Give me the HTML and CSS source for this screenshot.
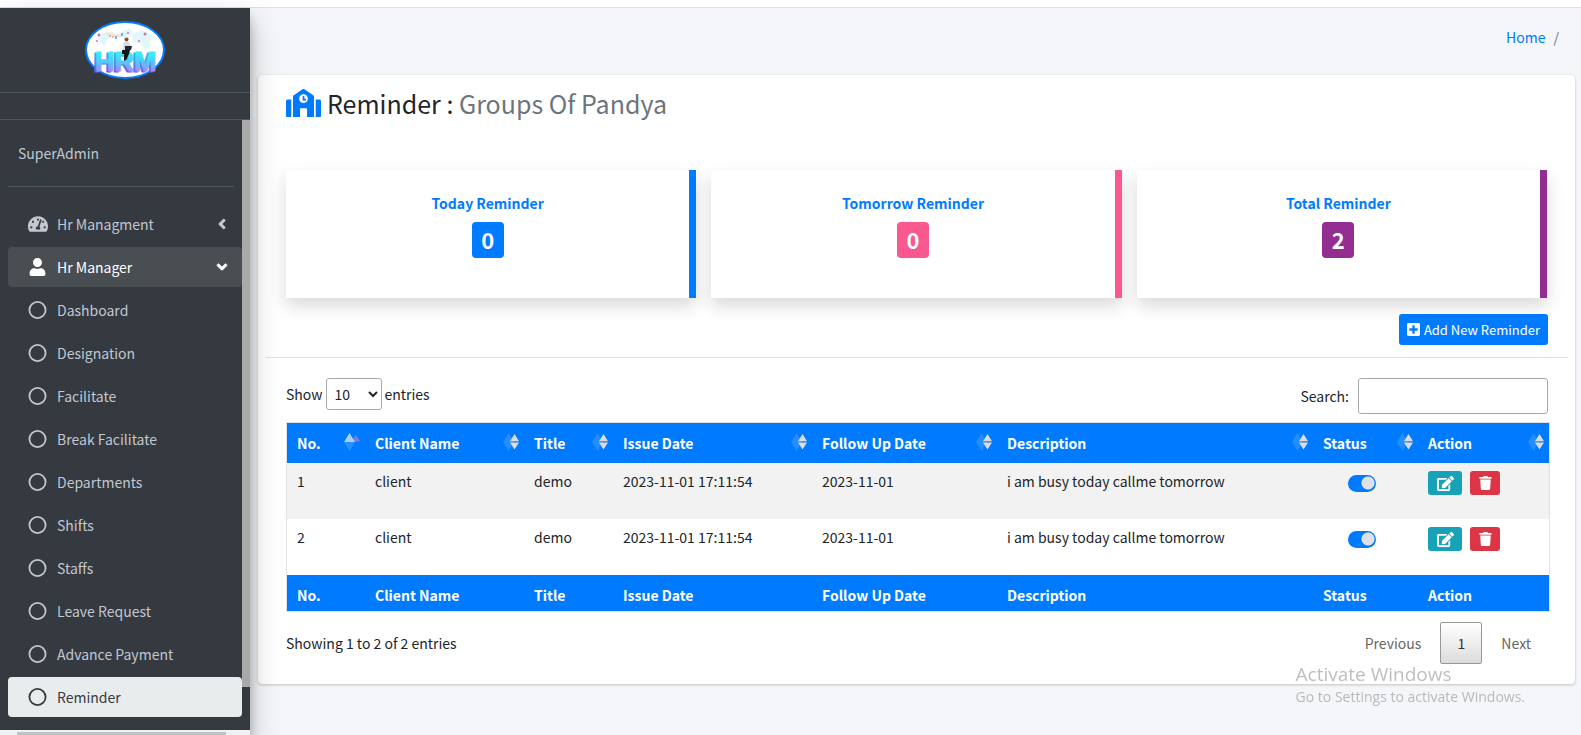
FILE: index.html
```html
<!DOCTYPE html>
<html lang="en">
<head>
<meta charset="utf-8">
<title>HRM - Reminder</title>
<link rel="stylesheet" href="styles.css">
</head>
<body>
<svg class="sprite" aria-hidden="true">
  <symbol id="gauge" viewBox="0 0 576 512"><path d="M288 32C128.94 32 0 160.94 0 320c0 52.8 14.25 102.26 39.06 144.8 5.61 9.62 16.3 15.2 27.44 15.2h443c11.14 0 21.83-5.58 27.44-15.2C561.75 422.26 576 372.8 576 320c0-159.06-128.94-288-288-288zm0 64c14.71 0 26.58 10.13 30.32 23.65-1.11 2.26-2.64 4.23-3.45 6.67l-9.22 27.67c-5.13 3.49-10.97 6.01-17.64 6.01-17.67 0-32-14.33-32-32S270.33 96 288 96zM96 384c-17.67 0-32-14.33-32-32s14.33-32 32-32 32 14.33 32 32-14.33 32-32 32zm48-160c-17.67 0-32-14.33-32-32s14.33-32 32-32 32 14.33 32 32-14.33 32-32 32zm246.77-72.41l-61.33 184C343.13 347.33 352 364.54 352 384c0 11.72-3.38 22.55-8.88 32H232.88c-5.5-9.45-8.88-20.28-8.88-32 0-33.94 26.5-61.43 59.9-63.59l61.34-184.01c4.17-12.56 17.73-19.45 30.36-15.17 12.57 4.19 19.35 17.79 15.17 30.36zm14.66 57.2l15.52-46.55c3.47-1.29 7.13-2.23 11.05-2.23 17.67 0 32 14.33 32 32s-14.33 32-32 32c-11.38-.01-21.25-6.1-26.57-15.22zM480 384c-17.67 0-32-14.33-32-32s14.33-32 32-32 32 14.33 32 32-14.33 32-32 32z"/></symbol>
  <symbol id="user" viewBox="0 0 448 512"><path d="M224 256c70.7 0 128-57.3 128-128S294.7 0 224 0 96 57.3 96 128s57.3 128 128 128zm89.6 32h-16.7c-22.2 10.2-46.9 16-72.9 16s-50.6-5.8-72.9-16h-16.7C60.2 288 0 348.2 0 422.4V464c0 26.5 21.5 48 48 48h352c26.5 0 48-21.5 48-48v-41.6c0-74.2-60.2-134.4-134.4-134.4z"/></symbol>
  <symbol id="ring" viewBox="0 0 18 18"><circle cx="9" cy="9" r="8.1" fill="none" stroke="currentColor" stroke-width="1.8"/></symbol>
  <symbol id="angle" viewBox="0 0 256 512"><path stroke="currentColor" stroke-width="24" d="M31.7 239l136-136c9.4-9.4 24.6-9.4 33.9 0l22.6 22.6c9.4 9.4 9.4 24.6 0 33.9L127.9 256l96.4 96.4c9.4 9.4 9.4 24.6 0 33.9L201.7 409c-9.4 9.4-24.6 9.4-33.9 0l-136-136c-9.5-9.4-9.5-24.6-.1-34z"/></symbol>
  <symbol id="school" viewBox="0 0 640 512"><path d="M0 224v272c0 8.84 7.16 16 16 16h80V192H32c-17.67 0-32 14.33-32 32zm360-48h-24v-40c0-4.42-3.58-8-8-8h-16c-4.42 0-8 3.58-8 8v64c0 4.42 3.58 8 8 8h48c4.42 0 8-3.58 8-8v-16c0-4.42-3.58-8-8-8zm137.75-63.96l-160-106.67a32.02 32.02 0 0 0-35.5 0l-160 106.67A32.002 32.002 0 0 0 128 138.66V512h128V368c0-8.84 7.16-16 16-16h96c8.84 0 16 7.16 16 16v144h128V138.67c0-10.7-5.35-20.69-14.25-26.63zM320 256c-44.18 0-80-35.82-80-80s35.82-80 80-80 80 35.82 80 80-35.82 80-80 80zm288-64h-64v320h80c8.84 0 16-7.16 16-16V224c0-17.67-14.33-32-32-32z"/></symbol>
  <symbol id="plus" viewBox="0 0 448 512"><path d="M400 32H48C21.5 32 0 53.5 0 80v352c0 26.5 21.5 48 48 48h352c26.5 0 48-21.5 48-48V80c0-26.5-21.5-48-48-48zm-32 252c0 6.6-5.4 12-12 12h-92v92c0 6.6-5.4 12-12 12h-56c-6.6 0-12-5.4-12-12v-92H92c-6.6 0-12-5.4-12-12v-56c0-6.6 5.4-12 12-12h92v-92c0-6.6 5.4-12 12-12h56c6.6 0 12 5.4 12 12v92h92c6.6 0 12 5.4 12 12v56z"/></symbol>
  <symbol id="edit" viewBox="0 0 576 512"><path d="M402.6 83.2l90.2 90.2c3.8 3.8 3.8 10 0 13.8L274.4 405.6l-92.8 10.3c-12.4 1.4-22.9-9.1-21.5-21.5l10.3-92.8L388.8 83.2c3.8-3.8 10-3.8 13.8 0zm162-22.9l-48.8-48.8c-15.2-15.2-39.9-15.2-55.2 0l-35.4 35.4c-3.8 3.8-3.8 10 0 13.8l90.2 90.2c3.8 3.8 10 3.8 13.8 0l35.4-35.4c15.2-15.3 15.2-40 0-55.2zM384 346.2V448H64V128h229.8c3.2 0 6.2-1.3 8.5-3.5l40-40c7.6-7.6 2.2-20.5-8.5-20.5H48C21.5 64 0 85.5 0 112v352c0 26.5 21.5 48 48 48h352c26.5 0 48-21.5 48-48V306.2c0-10.7-12.9-16-20.5-8.5l-40 40c-2.2 2.3-3.5 5.3-3.5 8.5z"/></symbol>
  <symbol id="trash" viewBox="0 0 448 512"><path d="M432 32H312l-9.4-18.7A24 24 0 0 0 281.1 0H166.8a23.72 23.72 0 0 0-21.4 13.3L136 32H16A16 16 0 0 0 0 48v32a16 16 0 0 0 16 16h416a16 16 0 0 0 16-16V48a16 16 0 0 0-16-16zM53.2 467a48 48 0 0 0 47.9 45h245.8a48 48 0 0 0 47.9-45L416 128H32z"/></symbol>
  <symbol id="sort" viewBox="0 0 16 18"><path d="M0 9 5.5 0 11 9 5.5 18z" fill="#fff" opacity=".14"/><path d="M7 8.2 11.500 1 16 8.200zM7 9.500h9l-4.500 7z" fill="#dcdcdc"/></symbol>
  <symbol id="sort-asc" viewBox="0 0 16 18"><path d="M7.500 8.500 12 1.500l4 7z" fill="#7a80dc"/><path d="M0 9h11l-5.500 9z" fill="#2990ff"/><path d="M0 9 5.500 0 11 9z" fill="#a6d0ff"/></symbol>
</svg>

<header class="topbar"></header>
<div class="layout">
  <aside class="sidebar">
    <a class="brand" href="#" aria-label="HRM">
      <svg class="logo" viewBox="0 0 80 58">
        <defs>
          <linearGradient id="letters" x1="0" y1="0" x2="0" y2="1"><stop offset="0.25" stop-color="#3fe9f7"/><stop offset="0.55" stop-color="#5cc0fb"/><stop offset="0.8" stop-color="#a58bff"/></linearGradient>
          <linearGradient id="letterside" x1="0" y1="0" x2="0" y2="1"><stop offset="0.2" stop-color="#1db4dd"/><stop offset="0.8" stop-color="#6a5be8"/></linearGradient>
        </defs>
        <ellipse cx="40" cy="29" rx="39" ry="28" fill="#fff" stroke="#007bff" stroke-width="2"/>
        <path d="M12 16c4-5 11-6 17-5l-3 6-5 3-1 5-5-4zM34 11l10-3 4 3-4 6-7-1zM47 13c7-5 16-4 22 3l-5 5 2 5-6 3-4-6-8-2z" fill="#e2f7fd"/>
        <path d="M21 13l16 2" stroke="#f6e3d6" stroke-width="3"/>
        <circle cx="25" cy="15" r="1" fill="#f7a44a"/><circle cx="28" cy="16" r="1" fill="#f7a44a"/>
        <path d="M31 15v3M37 12v3" stroke="#6ab5f4" stroke-width="2"/>
        <g fill="#d86fa5"><circle cx="14" cy="14" r="1.400"/><circle cx="60" cy="13" r="1.500"/><circle cx="12" cy="20" r="1"/><circle cx="54" cy="20" r="1"/><circle cx="43" cy="12" r="1"/></g>
        <text x="8" y="51" class="logo-side">HRM</text>
        <text x="10" y="50" class="logo-text">HRM</text>
        <circle cx="41.500" cy="18.500" r="2" fill="#8b4d36"/>
        <path d="M39 21h5l2 4-4 5h-5z" fill="#d9dde3"/>
        <path d="M40 25h7l-1 4h-6z" fill="#222831"/>
        <path d="M37 29h8l-1 4-3 6-2 1v-7h-2z" fill="#14171c"/>
      </svg>
    </a>
    <div class="strip"></div>
    <div class="side-body">
      <div class="side-scroll">
        <div class="account">SuperAdmin</div>
        <nav class="menu">
          <a href="#" class="item"><svg class="ico wide"><use href="#gauge"/></svg><span>Hr Managment</span><svg class="chev"><use href="#angle"/></svg></a>
          <a href="#" class="item open"><svg class="ico"><use href="#user"/></svg><span>Hr Manager</span><svg class="chev down"><use href="#angle"/></svg></a>
          <a href="#" class="item"><svg class="ico"><use href="#ring"/></svg><span>Dashboard</span></a>
          <a href="#" class="item"><svg class="ico"><use href="#ring"/></svg><span>Designation</span></a>
          <a href="#" class="item"><svg class="ico"><use href="#ring"/></svg><span>Facilitate</span></a>
          <a href="#" class="item"><svg class="ico"><use href="#ring"/></svg><span>Break Facilitate</span></a>
          <a href="#" class="item"><svg class="ico"><use href="#ring"/></svg><span>Departments</span></a>
          <a href="#" class="item"><svg class="ico"><use href="#ring"/></svg><span>Shifts</span></a>
          <a href="#" class="item"><svg class="ico"><use href="#ring"/></svg><span>Staffs</span></a>
          <a href="#" class="item"><svg class="ico"><use href="#ring"/></svg><span>Leave Request</span></a>
          <a href="#" class="item"><svg class="ico"><use href="#ring"/></svg><span>Advance Payment</span></a>
          <a href="#" class="item current"><svg class="ico"><use href="#ring"/></svg><span>Reminder</span></a>
        </nav>
      </div>
      <div class="vbar"><div class="vthumb"></div></div>
    </div>
    <div class="hbar"><div class="hthumb"></div></div>
  </aside>

  <main class="content">
    <nav class="crumbs" aria-label="Breadcrumb"><a href="#">Home</a><span>/</span></nav>
    <section class="card">
      <h1 class="title"><svg class="school"><use href="#school"/></svg><span>Reminder : <small>Groups Of Pandya</small></span></h1>
      <div class="stats">
        <div class="stat blue"><h2>Today Reminder</h2><span class="badge">0</span></div>
        <div class="stat pink"><h2>Tomorrow Reminder</h2><span class="badge">0</span></div>
        <div class="stat purple"><h2>Total Reminder</h2><span class="badge">2</span></div>
      </div>
      <div class="toolbar"><button type="button" class="add"><svg><use href="#plus"/></svg>Add New Reminder</button></div>
      <hr class="rule">
      <div class="filters">
        <label class="length">Show <select><option>10</option><option>25</option><option>50</option></select> entries</label>
        <label class="search">Search: <input type="search"></label>
      </div>
      <table class="grid">
        <colgroup><col class="c-no"><col class="c-client"><col class="c-title"><col class="c-issue"><col class="c-follow"><col class="c-desc"><col class="c-status"><col class="c-action"></colgroup>
        <thead>
          <tr>
            <th><div>No.<svg><use href="#sort-asc"/></svg></div></th>
            <th><div>Client Name<svg><use href="#sort"/></svg></div></th>
            <th><div>Title<svg><use href="#sort"/></svg></div></th>
            <th><div>Issue Date<svg><use href="#sort"/></svg></div></th>
            <th><div>Follow Up Date<svg><use href="#sort"/></svg></div></th>
            <th><div>Description<svg><use href="#sort"/></svg></div></th>
            <th><div>Status<svg><use href="#sort"/></svg></div></th>
            <th><div>Action<svg><use href="#sort"/></svg></div></th>
          </tr>
        </thead>
        <tbody>
          <tr>
            <td>1</td><td>client</td><td>demo</td><td>2023-11-01 17:11:54</td><td>2023-11-01</td><td>i am busy today callme tomorrow</td>
            <td><input type="checkbox" class="switch" aria-label="Status" checked></td>
            <td><div class="actions"><button type="button" class="edit" aria-label="Edit"><svg><use href="#edit"/></svg></button><button type="button" class="del" aria-label="Delete"><svg><use href="#trash"/></svg></button></div></td>
          </tr>
          <tr>
            <td>2</td><td>client</td><td>demo</td><td>2023-11-01 17:11:54</td><td>2023-11-01</td><td>i am busy today callme tomorrow</td>
            <td><input type="checkbox" class="switch" aria-label="Status" checked></td>
            <td><div class="actions"><button type="button" class="edit" aria-label="Edit"><svg><use href="#edit"/></svg></button><button type="button" class="del" aria-label="Delete"><svg><use href="#trash"/></svg></button></div></td>
          </tr>
        </tbody>
        <tfoot>
          <tr><th>No.</th><th>Client Name</th><th>Title</th><th>Issue Date</th><th>Follow Up Date</th><th>Description</th><th>Status</th><th>Action</th></tr>
        </tfoot>
      </table>
      <div class="pager">
        <span>Showing 1 to 2 of 2 entries</span>
        <div class="pages"><button type="button">Previous</button><button type="button" class="active">1</button><button type="button">Next</button></div>
      </div>
    </section>
  </main>
</div>
<div class="watermark"><p class="wm-big">Activate Windows</p><p class="wm-small">Go to Settings to activate Windows.</p></div>
</body>
</html>
```

FILE: styles.css
```css
* { box-sizing: border-box; }
body {
  margin: 0;
  height: 100vh;
  display: flex;
  flex-direction: column;
  overflow: hidden;
  background: #f4f6f9;
  color: #212529;
  font: 14px/24px "Noto Sans CJK SC", "Noto Sans", sans-serif;
}
a { color: #007bff; text-decoration: none; }
svg { fill: currentColor; flex: none; }
button, select, input { font: inherit; color: inherit; margin: 0; }
.sprite { position: absolute; width: 0; height: 0; }
.topbar { height: 8px; flex: none; background: #fff; border-bottom: 1px solid #dee2e6; }
.layout { flex: 1; min-height: 0; display: flex; }

.sidebar {
  position: relative;
  z-index: 2;
  width: 250px;
  flex: none;
  display: flex;
  flex-direction: column;
  background: #343a40;
  color: #c2c7d0;
  box-shadow: 0 14px 28px rgba(0,0,0,.25), 0 10px 10px rgba(0,0,0,.22);
}
.brand { display: flex; justify-content: center; padding: 13px 0; border-bottom: 1px solid #4b545c; }
.logo { width: 80px; height: 58px; }
.logo-text, .logo-side { font: bold 27px "Liberation Sans", sans-serif; stroke-width: 1; }
.logo-text { fill: url(#letters); stroke: url(#letters); }
.logo-side { fill: url(#letterside); stroke: url(#letterside); }
.strip { height: 27px; border-bottom: 1px solid #4b545c; }
.side-body { flex: 1; min-height: 0; display: flex; }
.side-scroll { flex: 1; min-width: 0; padding-left: 8px; overflow: hidden; }
.account { padding: 21px 10px; margin-right: 8px; border-bottom: 1px solid #4f5962; }
.menu { display: flex; flex-direction: column; gap: 3px; padding-top: 17px; }
.item { display: flex; align-items: center; height: 40px; padding: 0 12px 0 20px; border-radius: 4px; color: #c2c7d0; }
.item span { flex: 1; padding-left: 10px; }
.ico { width: 19px; height: 18px; }
.wide { width: 20px; }
.wide + span { padding-left: 9px; }
.open { background: #494e53; color: #fff; }
.current { background: #e9ecec; color: #343a40; }
.chev { width: 16px; height: 16px; }
.down { transform: rotate(-90deg); }
.vbar { width: 8px; }
.vthumb { height: 93%; background: #a9a9a9; }
.hbar { height: 5px; padding: 2px 24px 0 17px; background: #f1f1f1; }
.hthumb { height: 3px; background: #c1c1c1; }

.content { flex: 1; min-width: 0; padding: 0 6px 0 8px; }
.crumbs { display: flex; justify-content: flex-end; gap: 8px; padding: 17px 16px 26px 0; color: #6c757d; }
.card {
  background: #fff;
  border-radius: 4px;
  padding: 8px 27px 20px 28px;
  box-shadow: 0 0 1px rgba(0,0,0,.125), 0 1px 3px rgba(0,0,0,.2);
}
.title { display: flex; align-items: center; gap: 6px; margin: 0; font-size: 25px; line-height: 40px; font-weight: 400; }
.title small { font-size: 25px; color: #6c757d; }
.school { width: 35px; height: 28px; color: #007bff; }
.stats { display: grid; grid-template-columns: repeat(3, 1fr); gap: 15px; padding: 47px 1px 0 0; }
.stat {
  display: flex;
  flex-direction: column;
  align-items: center;
  gap: 7px;
  height: 128px;
  padding-top: 21px;
  background: #fff;
  border-right: 7px solid;
  box-shadow: 0 8px 16px rgba(0,0,0,.15);
}
.stat h2 { margin: 0; font-size: 14px; line-height: 24px; font-weight: 700; color: #007bff; }
.badge { width: 32px; height: 36px; border-radius: 4px; font-size: 22px; line-height: 34px; font-weight: 700; text-align: center; color: #fff; }
.blue { border-color: #007bff; }
.blue .badge { background: #007bff; }
.pink { border-color: #f9598f; }
.pink .badge { background: #f9598f; }
.purple { border-color: #942d92; }
.purple .badge { background: #942d92; }
.toolbar { display: flex; justify-content: flex-end; padding-top: 16px; }
.add { display: flex; align-items: center; gap: 4px; height: 31px; padding: 0 8px; border: 0; border-radius: 3px; background: #007bff; color: #fff; font-size: 13px; line-height: 20px; }
.add svg { width: 13px; height: 15px; }
.rule { margin: 12px -20px 20px; border: 0; border-top: 1px solid #dfe0e1; }
.filters { display: flex; justify-content: space-between; align-items: flex-start; }
.length { display: flex; align-items: center; gap: 3px; }
.length select { width: 56px; height: 32px; padding: 4px; border: 1px solid #aaa; border-radius: 3px; background: #fff; }
.search { display: flex; align-items: center; gap: 9px; }
.search input { width: 190px; height: 36px; padding: 5px; border: 1px solid #aaa; border-radius: 3px; background: #fff; }

.grid { width: calc(100% + 2px); margin-top: 8px; table-layout: fixed; border-collapse: separate; border-spacing: 0; border: 1px solid #dee2e6; }
.c-no { width: 78px; }
.c-client { width: 159px; }
.c-title { width: 89px; }
.c-issue { width: 199px; }
.c-follow { width: 185px; }
.c-desc { width: 316px; }
.c-status { width: 105px; }
.c-action { width: 131px; }
.grid th { background: #007bff; color: #fff; font-weight: 700; text-align: left; white-space: nowrap; padding: 8px 5px 4px 10px; }
.grid thead th { padding: 8px 5px 8px 10px; }
.grid th div { display: flex; justify-content: space-between; align-items: center; }
.grid th svg { width: 16px; height: 18px; margin-bottom: 2px; }
.grid td { height: 56px; padding: 6px 0 0 10px; vertical-align: top; white-space: nowrap; }
.grid tbody tr:nth-child(odd) { background: #f2f2f2; }
.switch { appearance: none; display: block; width: 28px; height: 17px; margin: 6px 0 0 25px; border-radius: 9px; background: radial-gradient(circle at 20px 8px, #dee2e6 6px, #007bff 7px); }
.actions { display: flex; gap: 8px; padding-top: 2px; }
.actions button { display: flex; align-items: center; justify-content: center; height: 24px; padding: 0; border: 0; border-radius: 3px; color: #fff; }
.edit { width: 34px; background: #17a2b8; }
.del { width: 30px; background: #dc3545; }
.edit svg { width: 17px; height: 15px; }
.del svg { width: 13px; height: 14px; }

.pager { display: flex; justify-content: space-between; align-items: center; padding-top: 10px; }
.pages { display: flex; align-items: center; gap: 2px; }
.pages button { height: 42px; padding: 0 16px; border: 1px solid transparent; border-radius: 2px; background: none; color: #666; }
.pages .active { width: 42px; padding: 0; border-color: #979797; background: linear-gradient(#fff, #dcdcdc); color: #333; }

.watermark { position: fixed; z-index: 3; right: 56px; bottom: 27px; color: rgba(125,125,125,.5); font-family: "Open Sans", sans-serif; pointer-events: none; }
.watermark p { margin: 0; white-space: nowrap; }
.wm-big { font-size: 19px; line-height: 24px; }
.wm-small { font-size: 14px; line-height: 22px; }
```
